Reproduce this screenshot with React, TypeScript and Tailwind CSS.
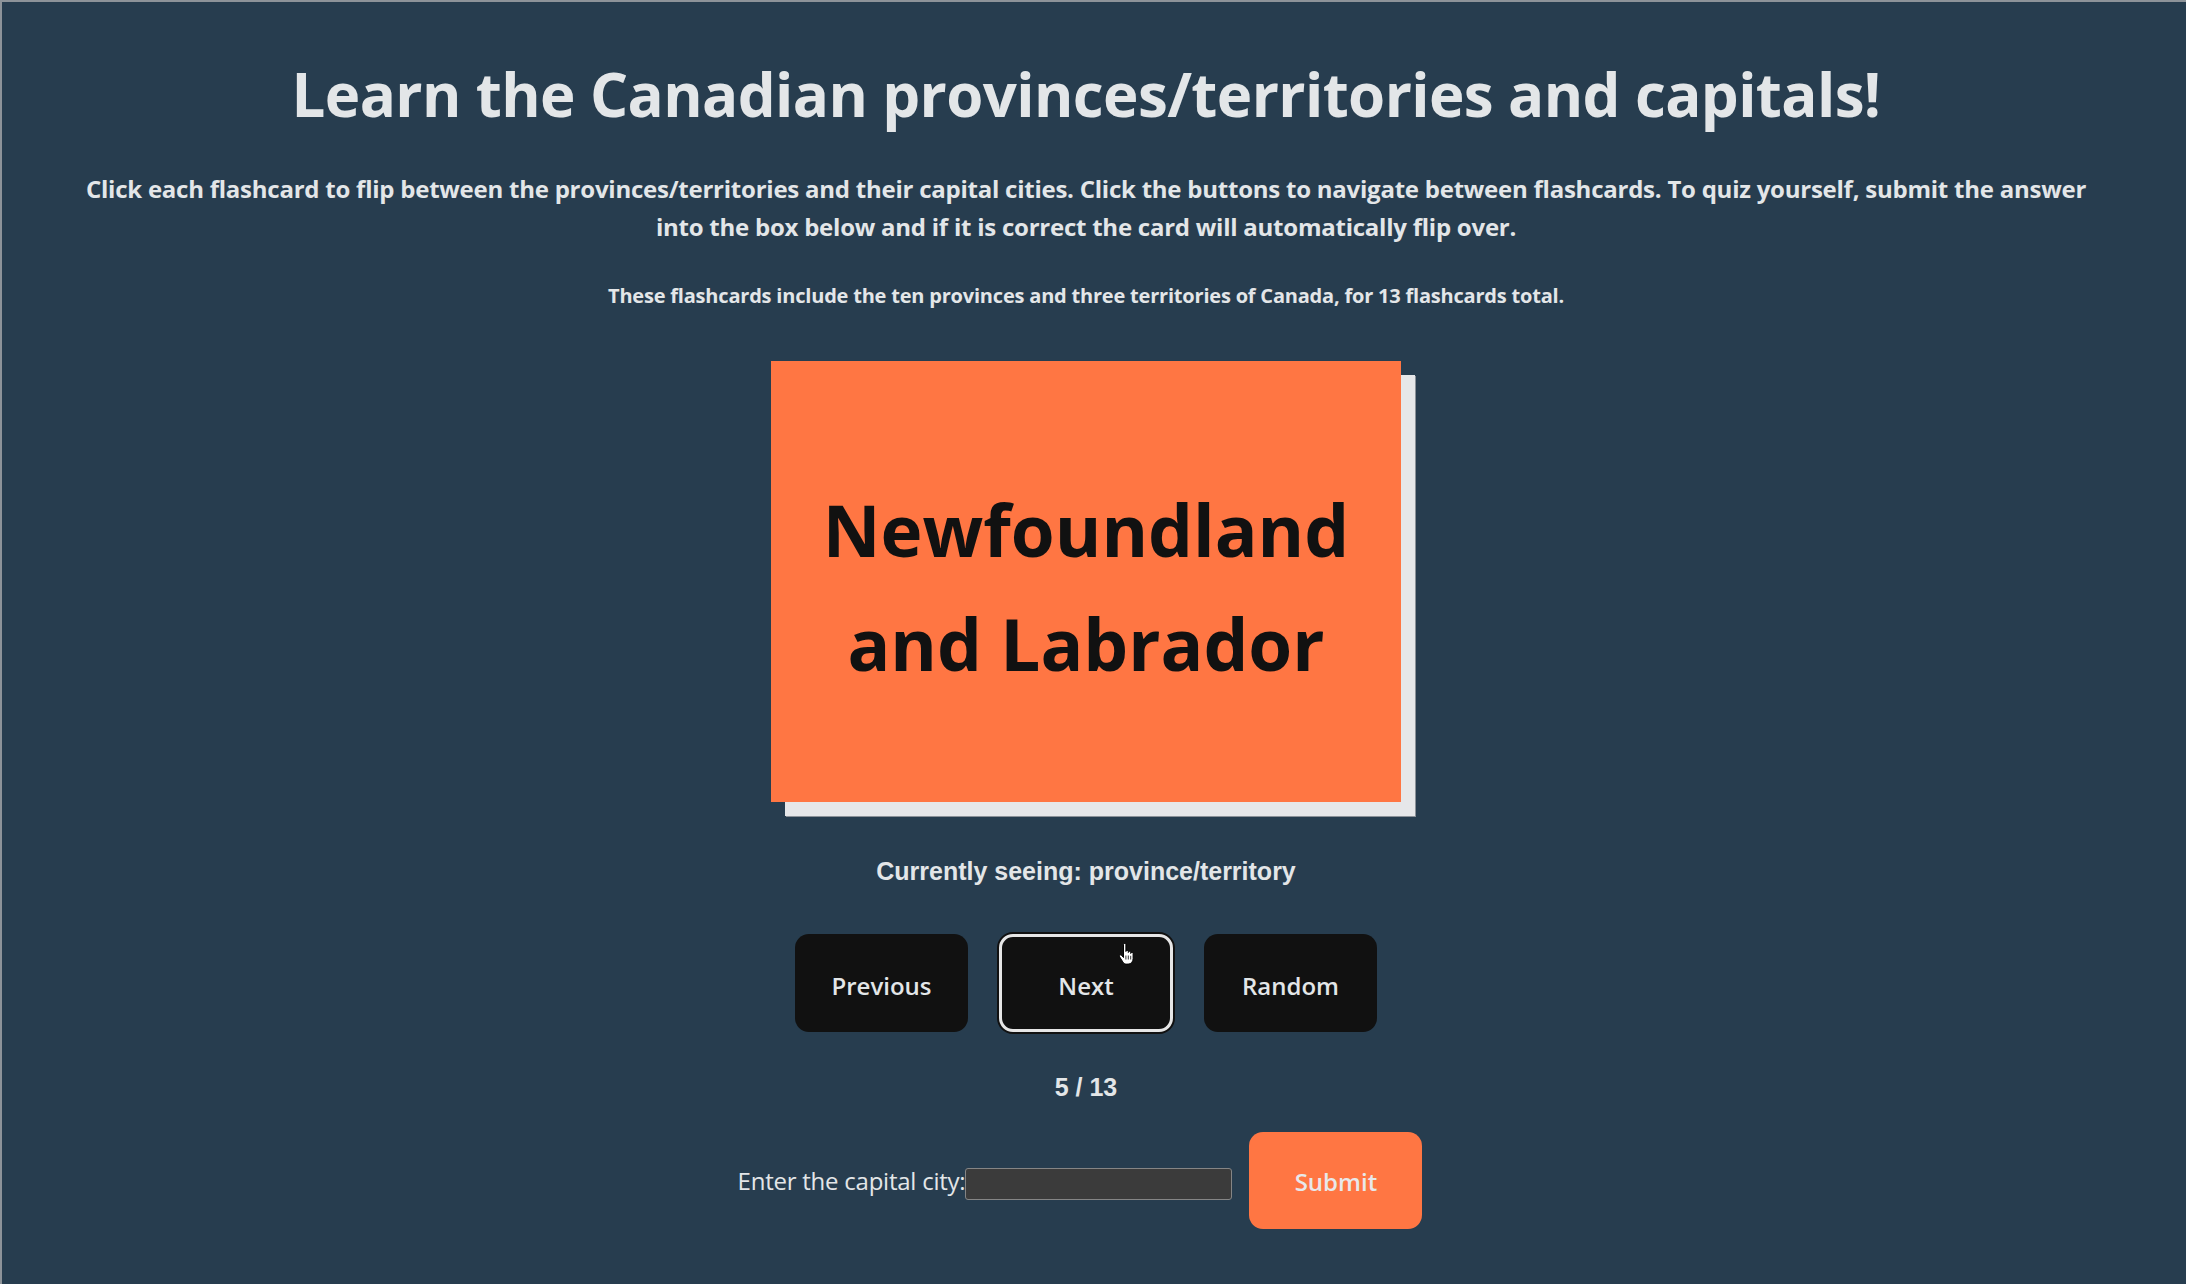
import { useState } from 'react'

const cards = [
  { place: 'British Columbia', capital: 'Victoria' },
  { place: 'Alberta', capital: 'Edmonton' },
  { place: 'Saskatchewan', capital: 'Regina' },
  { place: 'Manitoba', capital: 'Winnipeg' },
  { place: 'Newfoundland and Labrador', capital: "St. John's" },
  { place: 'Ontario', capital: 'Toronto' },
  { place: 'Quebec', capital: 'Quebec City' },
  { place: 'New Brunswick', capital: 'Fredericton' },
  { place: 'Nova Scotia', capital: 'Halifax' },
  { place: 'Prince Edward Island', capital: 'Charlottetown' },
  { place: 'Yukon', capital: 'Whitehorse' },
  { place: 'Northwest Territories', capital: 'Yellowknife' },
  { place: 'Nunavut', capital: 'Iqaluit' },
]

function HandCursor() {
  return (
    <svg width="17" height="23" viewBox="0 0 17 23" className="absolute left-[116px] top-[6px] pointer-events-none">
      <path
        d="M5.5 1.6a1.2 1.2 0 0 1 2.4 0V8.5a1.2 1.2 0 0 1 2.4 0v1a1.2 1.2 0 0 1 2.4 0v1a1.2 1.2 0 0 1 2.4 0v5c0 3.2-2 5.6-5 5.6H8.6c-1.8 0-2.9-.8-3.8-2.2L1.6 13.8a1.2 1.2 0 0 1 2-1.4l1.9 2.1Z"
        fill="#fff"
        stroke="#000"
        strokeWidth="1"
        strokeLinejoin="round"
      />
      <path d="M10.3 12.5v4M12.7 12.8v3.7M7.9 12.5v4" stroke="#000" strokeWidth="0.8" />
    </svg>
  )
}

export default function App() {
  const [index, setIndex] = useState(4)
  const [flipped, setFlipped] = useState(false)
  const [guess, setGuess] = useState('')

  const card = cards[index]

  const go = (next: number) => {
    setIndex((next + cards.length) % cards.length)
    setFlipped(false)
    setGuess('')
  }

  const submit = () => {
    if (guess.trim().toLowerCase() === card.capital.toLowerCase()) setFlipped(true)
  }

  return (
    <div className="min-h-screen bg-[#273d4f] border-t-2 border-l-2 border-[#8d9399] text-[#e3e6e8] font-['Open_Sans',sans-serif]">
      <div className="flex flex-col items-center pr-[16px] text-center">
        <h1 className="mt-[59px] text-[60px] font-bold leading-[66px] tracking-[-0.01em]">
          Learn the Canadian provinces/territories and capitals!
        </h1>
        <p className="mt-[43px] max-w-[2030px] text-[24px] font-bold leading-[38px] tracking-[-0.01em]">
          Click each flashcard to flip between the provinces/territories and their capital cities. Click the buttons to navigate between flashcards. To quiz yourself, submit the answer into the box below and if it is correct the card will automatically flip over.
        </p>
        <p className="mt-[35px] text-[20px] font-bold leading-[30px] tracking-[-0.01em]">
          These flashcards include the ten provinces and three territories of Canada, for 13 flashcards total.
        </p>

        <button
          onClick={() => setFlipped(!flipped)}
          className="mt-[50px] flex h-[441px] w-[630px] items-center justify-center bg-[#ff7643] px-[30px] pt-[11px] text-[71px] font-bold leading-[114px] text-[#111111] shadow-[14px_14px_0_0_#e6e7e9,15px_15px_0_0_#8b9198]"
        >
          {flipped ? card.capital : card.place}
        </button>

        <p className="mt-[50px] font-['Liberation_Sans',Arial,sans-serif] text-[25px] font-bold leading-[38px]">
          Currently seeing: {flipped ? 'capital city' : 'province/territory'}
        </p>

        <div className="mt-[44px] flex gap-[31px]">
          <button
            onClick={() => go(index - 1)}
            className="h-[98px] w-[173px] rounded-[14px] bg-[#111111] pt-[5px] text-[24px] font-semibold text-[#e3e6e8]"
          >
            Previous
          </button>
          <button
            onClick={() => go(index + 1)}
            className="relative h-[98px] w-[174px] rounded-[14px] border-[3px] border-[#e6e6e6] bg-[#111111] pt-[5px] text-[24px] font-semibold text-[#e3e6e8] shadow-[0_0_0_2px_#111111]"
          >
            Next
            <HandCursor />
          </button>
          <button
            onClick={() => go(Math.floor(Math.random() * cards.length))}
            className="h-[98px] w-[173px] rounded-[14px] bg-[#111111] pt-[5px] text-[24px] font-semibold text-[#e3e6e8]"
          >
            Random
          </button>
        </div>

        <p className="mt-[36px] font-['Liberation_Sans',Arial,sans-serif] text-[25px] font-bold leading-[38px]">
          {index + 1} / {cards.length}
        </p>

        <div className="mt-[26px] flex items-center pr-[12px]">
          <label className="text-[24px] leading-[38px] tracking-[-0.01em]">Enter the capital city:</label>
          <input
            value={guess}
            onChange={(e) => setGuess(e.target.value)}
            className="mt-[6px] h-[32px] w-[267px] rounded-[3px] border border-[#858585] bg-[#3b3b3b] px-2 text-[20px] text-[#e3e6e8] outline-none"
          />
          <button
            onClick={submit}
            className="ml-[17px] h-[97px] w-[173px] rounded-[14px] bg-[#ff7643] pt-[3px] text-[24px] font-semibold text-[#e8e8ea]"
          >
            Submit
          </button>
        </div>
      </div>
    </div>
  )
}
